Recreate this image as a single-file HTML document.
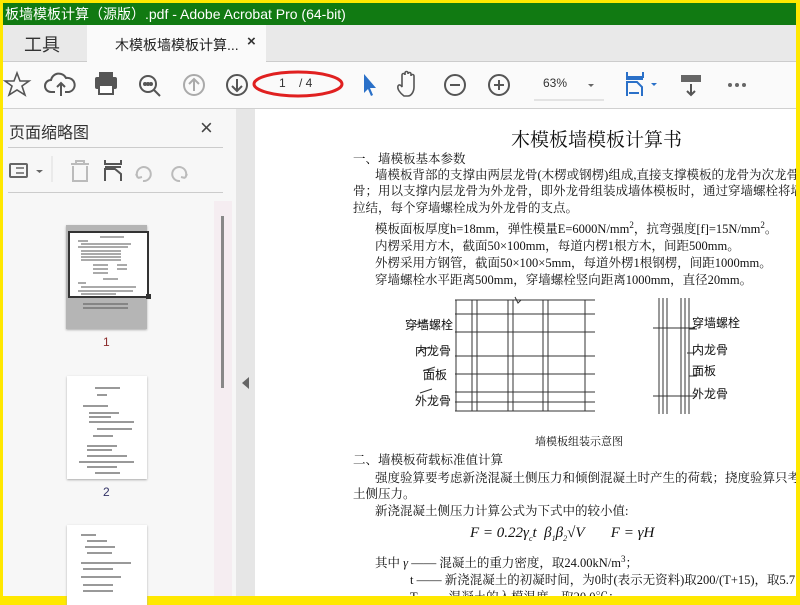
<!DOCTYPE html>
<html><head><meta charset="utf-8"><style>
*{margin:0;padding:0;box-sizing:border-box}
body{width:800px;height:600px;overflow:hidden;background:#ffe800;position:relative;font-family:"Liberation Sans","Noto Sans CJK SC",sans-serif}
.abs{position:absolute}
#title{left:3px;top:3px;width:793px;height:22px;background:#117a12;color:#fff;font-size:14px;line-height:22px;padding-left:2px;white-space:nowrap;overflow:hidden}
#tabs{left:3px;top:25px;width:793px;height:37px;background:#e9e9e9;border-bottom:1px solid #ccc}
#tb{left:3px;top:62px;width:793px;height:47px;background:#fafafa;border-bottom:1px solid #d0d0d0}
#side{left:3px;top:109px;width:233px;height:487px;background:#f7f7f7}
#split{left:236px;top:109px;width:19px;height:487px;background:#e6e6e6}
#doc{left:255px;top:109px;width:541px;height:487px;background:#fff;overflow:hidden}
.t{position:absolute;white-space:nowrap;font-family:"Liberation Serif","Noto Serif CJK SC","Noto Sans CJK SC",serif;font-size:12.5px;line-height:16px;color:#111}
sup,sub{line-height:0}
svg{position:absolute}
.thumb{position:absolute;background:#fff;box-shadow:0 1px 2px #aaa}
</style></head><body>
<div id="title" class="abs">板墙模板计算（源版）.pdf - Adobe Acrobat Pro (64-bit)</div>
<div id="tabs" class="abs">
 <div class="abs" style="left:21px;top:6px;font-size:18px;color:#333">工具</div>
 <div class="abs" style="left:84px;top:0;width:179px;height:37px;background:#fafafa;"></div>
 <div class="abs" style="left:112px;top:10px;font-size:14px;color:#222">木模板墙模板计算...</div>
 <div class="abs" style="left:244px;top:8px;font-size:15px;color:#333;font-weight:bold">×</div>
</div>
<div id="tb" class="abs">
<svg width="793" height="47" style="left:0;top:0" fill="none" stroke="#555" stroke-width="2">
 <polygon points="14,11 17,19 26,19 19,24 22,33 14,28 6,33 9,24 2,19 11,19" stroke-width="1.6"/>
 <path d="M52,30 h-4 a6,6 0 0 1 0,-12 a8,8 0 0 1 15,-2 a6,6 0 0 1 3,14 h-4 M58,34 v-13 M54,25 l4,-4 l4,4"/>
 <rect x="92" y="15" width="22" height="12" rx="2" fill="#555" stroke="none"/><rect x="96" y="10" width="14" height="5" fill="#555" stroke="none"/><rect x="96" y="23" width="14" height="9" fill="#fff" stroke="#555"/>
 <circle cx="145" cy="22" r="8"/><path d="M151,28 l6,6"/><circle cx="142" cy="22" r="1" fill="#555"/><circle cx="145" cy="22" r="1" fill="#555"/><circle cx="148" cy="22" r="1" fill="#555"/>
 <circle cx="191" cy="23" r="10" stroke="#aaa"/><path d="M191,29 v-12 M186,22 l5,-5 l5,5" stroke="#aaa"/>
 <circle cx="234" cy="23" r="10"/><path d="M234,17 v12 M229,24 l5,5 l5,-5"/>
 <ellipse cx="295" cy="22" rx="44" ry="12" stroke="#e02020" stroke-width="3"/>
 <path d="M361,12 v19 l4,-4 l3,7 l2,-1 l-3,-7 h6 z" fill="#2a70c8" stroke="none"/>
 <path d="M401,34 c-4,-3 -7,-7 -6,-10 c1,-2 3,-1 4,1 v-12 a1.5,1.5 0 0 1 3,0 v-2 a1.5,1.5 0 0 1 3,0 v1 a1.5,1.5 0 0 1 3,0 v2 a1.5,1.5 0 0 1 3,0 v11 c0,5 -3,9 -6,9 z" stroke-width="1.6"/>
 <circle cx="452" cy="23" r="10"/><path d="M447,23 h10"/>
 <circle cx="496" cy="23" r="10"/><path d="M491,23 h10 M496,18 v10"/>
 <path d="M531,38 h70" stroke="#ccc" stroke-width="1"/><path d="M585,22 l3,3 l3,-3 z" fill="#666" stroke="none"/>
 <path d="M624,10 v5 h16 v-5 M623,17 h17" stroke="#2a70c8"/><path d="M624,34 v-14 h10 l5,5 v9 M626,31 h10" stroke="#2a70c8"/><path d="M648,21 h6 l-3,3 z" fill="#2a70c8" stroke="none"/>
 <rect x="678" y="13" width="20" height="7" fill="#666" stroke="none"/><path d="M688,22 v11 M684,29 l4,4 l4,-4"/>
 <circle cx="727" cy="23" r="2" fill="#666" stroke="none"/><circle cx="734" cy="23" r="2" fill="#666" stroke="none"/><circle cx="741" cy="23" r="2" fill="#666" stroke="none"/>
</svg>
<div class="abs" style="left:276px;top:14px;font-size:12px;color:#333">1&nbsp;&nbsp;&nbsp;&nbsp;/ 4</div>
<div class="abs" style="left:540px;top:14px;font-size:12px;color:#333">63%</div>
</div>
<div id="side" class="abs">
 <div class="abs" style="left:6px;top:10px;font-size:16px;color:#333">页面缩略图</div>
 <div class="abs" style="left:197px;top:6px;font-size:22px;color:#444">×</div>
 <div class="abs" style="left:5px;top:38px;width:215px;height:1px;background:#ccc"></div>
 <div class="abs" style="left:5px;top:83px;width:215px;height:1px;background:#ccc"></div>
 <svg width="233" height="40" style="left:0;top:42px" fill="none" stroke="#666" stroke-width="2">
  <rect x="7" y="13" width="17" height="13" rx="1"/><path d="M13,17 h8 M13,22 h8" stroke-width="1.5"/>
  <path d="M33,19 h7 l-3.5,3 z" fill="#666" stroke="none"/><path d="M49,5 v26" stroke="#ddd" stroke-width="1"/>
  <path d="M68,13 h18 M73,13 v-3 h8 v3 M70,15 v15 h14 v-15" stroke="#bbb"/>
  <path d="M102,9 v4 h16 v-4 M102,16 h16 M102,30 v-12 h10 l6,5 v7" stroke="#555"/>
  <path d="M135,27 a7,7 0 1 1 5,3 M135,27 l-2,-4 M135,27 l4,-1" stroke="#bbb"/>
  <path d="M182,27 a7,7 0 1 0 -5,3 M182,27 l2,-4 M182,27 l-4,-1" stroke="#bbb"/>
 </svg>
 <div class="abs" style="left:211px;top:92px;width:18px;height:395px;background:#f5edf1"></div>
 <div class="abs" style="left:218px;top:107px;width:3px;height:172px;background:#888"></div>
 <div class="thumb" style="left:63px;top:116px;width:81px;height:104px;background:#b5b5b5"></div>
 <div class="abs" style="left:65px;top:122px;width:81px;height:67px;background:#fff;border:2px solid #333"></div>
 <svg width="80" height="80" style="left:70px;top:125px" stroke="#555" stroke-width="1"><path d="M27,3 h24 M5,7 h10 M8,10 h50 M5,13 h50 M8,17 h40 M8,20 h40 M8,23 h40 M8,26 h40 M20,31 h15 M44,31 h10 M20,35 h15 M44,35 h10 M20,39 h15 M30,45 h15 M5,49 h8 M8,53 h55 M5,57 h55 M8,60 h35 M10,70 h45 M10,74 h45"/></svg>
 <div class="abs" style="left:143px;top:185px;width:5px;height:5px;background:#333"></div>
 <div class="abs" style="left:100px;top:226px;font-size:12px;color:#8a2b2b">1</div>
 <div class="thumb" style="left:64px;top:267px;width:80px;height:103px"></div>
 <svg width="80" height="100" style="left:64px;top:267px" stroke="#333" stroke-width="1"><path d="M28,12 h25 M30,19 h10 M16,30 h25 M22,37 h30 M22,41 h22 M22,46 h45 M30,53 h35 M26,60 h20 M20,70 h30 M20,74 h25 M20,80 h40 M12,86 h55 M20,91 h30 M28,97 h25"/></svg>
 <div class="abs" style="left:100px;top:376px;font-size:12px;color:#336">2</div>
 <div class="thumb" style="left:64px;top:416px;width:80px;height:80px"></div>
 <svg width="80" height="70" style="left:64px;top:416px" stroke="#333" stroke-width="1"><path d="M14,10 h15 M20,16 h20 M18,22 h30 M20,28 h25 M14,38 h50 M16,44 h30 M14,52 h40 M16,60 h30 M16,66 h30"/></svg>
</div>
<div id="split" class="abs"><div class="abs" style="left:6px;top:268px;width:0;height:0;border-top:6px solid transparent;border-bottom:6px solid transparent;border-right:7px solid #666"></div></div>
<div id="doc" class="abs">
 <div class="t" style="left:256px;top:20px;font-size:19px;line-height:24px">木模板墙模板计算书</div>
 <div class="t" style="left:98px;top:42px">一、墙模板基本参数</div>
 <div class="t" style="left:120px;top:58px">墙模板背部的支撑由两层龙骨(木楞或钢楞)组成,直接支撑模板的龙骨为次龙骨,即内</div>
 <div class="t" style="left:98px;top:74px">骨；用以支撑内层龙骨为外龙骨，即外龙骨组装成墙体模板时，通过穿墙螺栓将墙体两片</div>
 <div class="t" style="left:98px;top:91px">拉结，每个穿墙螺栓成为外龙骨的支点。</div>
 <div class="t" style="left:120px;top:112px">模板面板厚度h=18mm，弹性模量E=6000N/mm<sup style="font-size:9px">2</sup>，抗弯强度[f]=15N/mm<sup style="font-size:9px">2</sup>。</div>
 <div class="t" style="left:120px;top:129px">内楞采用方木，截面50×100mm，每道内楞1根方木，间距500mm。</div>
 <div class="t" style="left:120px;top:146px">外楞采用方钢管，截面50×100×5mm，每道外楞1根钢楞，间距1000mm。</div>
 <div class="t" style="left:120px;top:163px">穿墙螺栓水平距离500mm，穿墙螺栓竖向距离1000mm，直径20mm。</div>
 <svg width="541" height="130" style="left:0;top:185px" stroke="#333" stroke-width="1" fill="none">
  <path d="M200,6 h140 M200,117 h140 M200,20 h140 M200,38 h140 M200,62 h140 M200,80 h140 M200,98 h140 M200,108 h140"/>
  <path d="M201,6 v111 M217,6 v111 M222,6 v111 M253,6 v111 M258,6 v111 M288,6 v111 M293,6 v111 M330,6 v111"/>
  <path d="M260,3 l3,6 l3,-3" /><path d="M160,31 l12,-4 M163,57 l12,-4 M168,77 l12,-4 M165,99 l12,-4"/>
  <path d="M404,4 v116 M434,4 v116 M408,4 v116 M430,4 v116 M412,4 v116 M426,4 v116 M398,34 h42 M398,102 h42 M434,35 h8 M432,59 h8 M434,82 h8 M434,102 h8"/>
 </svg>
 <div class="t" style="left:150px;top:208px;font-family:'Liberation Sans','Noto Sans CJK SC',sans-serif;font-size:12px">穿墙螺栓</div>
 <div class="t" style="left:160px;top:234px;font-family:'Liberation Sans','Noto Sans CJK SC',sans-serif;font-size:12px">内龙骨</div>
 <div class="t" style="left:168px;top:258px;font-family:'Liberation Sans','Noto Sans CJK SC',sans-serif;font-size:12px">面板</div>
 <div class="t" style="left:160px;top:284px;font-family:'Liberation Sans','Noto Sans CJK SC',sans-serif;font-size:12px">外龙骨</div>
 <div class="t" style="left:437px;top:206px;font-family:'Liberation Sans','Noto Sans CJK SC',sans-serif;font-size:12px">穿墙螺栓</div>
 <div class="t" style="left:437px;top:233px;font-family:'Liberation Sans','Noto Sans CJK SC',sans-serif;font-size:12px">内龙骨</div>
 <div class="t" style="left:437px;top:254px;font-family:'Liberation Sans','Noto Sans CJK SC',sans-serif;font-size:12px">面板</div>
 <div class="t" style="left:437px;top:277px;font-family:'Liberation Sans','Noto Sans CJK SC',sans-serif;font-size:12px">外龙骨</div>
 <div class="t" style="left:280px;top:325px;font-size:11px">墙模板组装示意图</div>
 <div class="t" style="left:98px;top:343px">二、墙模板荷载标准值计算</div>
 <div class="t" style="left:120px;top:361px">强度验算要考虑新浇混凝土侧压力和倾倒混凝土时产生的荷载；挠度验算只考虑新浇</div>
 <div class="t" style="left:98px;top:377px">土侧压力。</div>
 <div class="t" style="left:120px;top:394px">新浇混凝土侧压力计算公式为下式中的较小值:</div>
 <div class="t" style="left:215px;top:414px;font-size:15px;font-style:italic;line-height:20px">F = 0.22γ<sub style="font-size:8px">c</sub>t&nbsp; β<sub style="font-size:8px">1</sub>β<sub style="font-size:8px">2</sub>√V&nbsp;&nbsp;&nbsp;&nbsp;&nbsp;&nbsp;&nbsp;F = γH</div>
 <div class="t" style="left:120px;top:446px">其中 <i>γ</i> —— 混凝土的重力密度，取24.00kN/m<sup style="font-size:9px">3</sup>；</div>
 <div class="t" style="left:155px;top:463px">t —— 新浇混凝土的初凝时间，为0时(表示无资料)取200/(T+15)，取5.714h</div>
 <div class="t" style="left:155px;top:480px">T —— 混凝土的入模温度，取20.0℃；</div>
</div>
</body></html>
